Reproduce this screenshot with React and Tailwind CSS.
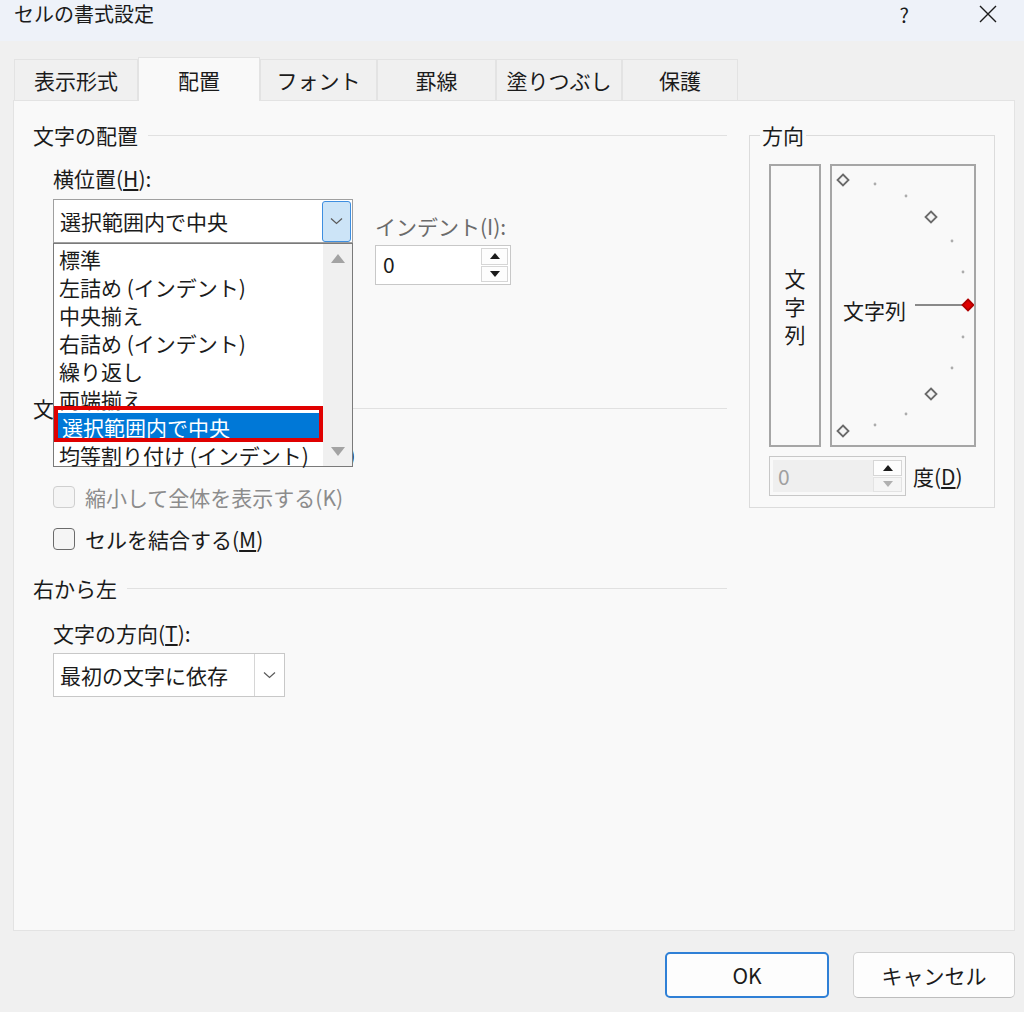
import React from 'react';

// --- Small drawings ---
const Chevron = () => (
  <svg width="13" height="8" viewBox="0 0 13 8"><path d="M1 1.5l5.5 5 5.5-5" fill="none" stroke="#5a5a5a" strokeWidth="1.2" /></svg>
);
const Tri = ({ up, color = '#1b1b1b', w = 10, h = 6 }) => (
  <svg width={w} height={h} viewBox={`0 0 ${w} ${h}`}>
    <path d={up ? `M0 ${h}L${w / 2} 0L${w} ${h}Z` : `M0 0L${w} 0L${w / 2} ${h}Z`} fill={color} />
  </svg>
);
const CloseIcon = () => (
  <svg width="18" height="18" viewBox="0 0 18 18"><path d="M1 1L17 17M17 1L1 17" stroke="#1b1b1b" strokeWidth="1.4" /></svg>
);

const Diamond = ({ x, y, red }) => (
  <path
    d={`M${x} ${y - 5.5}L${x + 5.5} ${y}L${x} ${y + 5.5}L${x - 5.5} ${y}Z`}
    fill={red ? '#e00000' : '#f4f4f4'}
    stroke={red ? '#b00000' : '#6a6a6a'}
    strokeWidth="1.8"
  />
);

const SectionHeader = ({ title }) => (
  <div className="flex items-center h-[28px] gap-[10px]">
    <span>{title}</span>
    <div className="flex-1 h-px bg-[#e1e1e1]" />
  </div>
);

const Checkbox = ({ children, disabled, small }) => (
  <div className={`flex items-center h-[28px] pl-[20px] gap-[10px] ${disabled ? 'text-[#8c8c8c]' : ''} ${small ? 'text-[20px]' : ''}`}>
    <div className={`w-[22px] h-[22px] rounded-[4px] bg-[#f5f5f5] border-[1.5px] ${disabled ? 'border-[#cfcfcf]' : 'border-[#6b6b6b]'}`} />
    <span>{children}</span>
  </div>
);

const tabs = [
  { label: '表示形式', w: 'w-[124px]' },
  { label: '配置', w: 'w-[122px]', active: true },
  { label: 'フォント', w: 'w-[117px]' },
  { label: '罫線', w: 'w-[119px]' },
  { label: '塗りつぶし', w: 'w-[126px]' },
  { label: '保護', w: 'w-[116px]' },
];

const options = ['標準', '左詰め (インデント)', '中央揃え', '右詰め (インデント)', '繰り返し', '両端揃え', '選択範囲内で中央', '均等割り付け (インデント)'];

const dots = [[43, 18], [74, 30], [120, 75], [131, 106], [131, 171], [120, 202], [74, 248], [43, 259]];

export default function App() {
  return (
    <div className="w-[1024px] h-[1012px] overflow-hidden bg-[#f0f0f0] text-[#1b1b1b] text-[21px] leading-[28px] font-['Noto_Sans_CJK_JP','Noto_Sans',sans-serif]">
      {/* --- Title bar --- */}
      <div className="h-[41px] bg-[#eef2f9]">
        <div className="h-[28px] flex items-center pl-[14px]">
          <span className="text-[20px]">セルの書式設定</span>
          <span className="ml-auto text-[20px] mr-[70px] mt-[2px]">?</span>
          <span className="mr-[27px]"><CloseIcon /></span>
        </div>
      </div>

      {/* --- Tabs --- */}
      <div className="mt-[16px] ml-[14px] h-[43px] flex items-end">
        {tabs.map(t => (
          <div
            key={t.label}
            className={`${t.w} flex items-center justify-center border border-b-0 border-[#e3e3e3] ${t.active ? 'h-[44px] -mb-px bg-[#f9f9f9] relative z-10' : 'h-[41px] bg-[#f0f0f0]'}`}
          >
            {t.label}
          </div>
        ))}
      </div>

      {/* --- Panel --- */}
      <div className="ml-[13px] w-[1002px] h-[831px] border border-[#e3e3e3] bg-[#f9f9f9] flex pt-[20px] pl-[19px]">
        <div className="w-[694px] flex flex-col">
          <SectionHeader title="文字の配置" />
          <div className="mt-[15px] pl-[20px]">横位置(<span className="underline">H</span>):</div>

          <div className="mt-[7px] pl-[20px] flex items-start">
            <div className="relative w-[300px]">
              <div className="h-[44px] border border-[#a0a0a0] bg-white flex items-center pl-[6px]">
                <span className="flex-1">選択範囲内で中央</span>
                <div className="w-[29px] h-[41px] mr-px bg-[#cce4f7] border-[1.5px] border-[#3d8ee0] rounded-[3px] flex items-center justify-center">
                  <Chevron />
                </div>
              </div>
              {/* open list */}
              <div className="absolute z-20 top-[44px] left-0 w-[300px] h-[224px] border border-[#7a7a7a] bg-white flex">
                <div className="flex-1 pt-[1px]">
                  {options.map(o => (
                    <div
                      key={o}
                      className={`h-[28px] pl-[5px] whitespace-nowrap ${o === '選択範囲内で中央' ? 'bg-[#0078d7] text-white mx-[3px] pl-[2px]' : ''}`}
                    >
                      {o}
                    </div>
                  ))}
                </div>
                <div className="w-[29px] bg-[#f0f0f0] flex flex-col items-center justify-between py-[10px]">
                  <Tri up color="#a3a3a3" w={14} h={9} />
                  <Tri color="#a3a3a3" w={14} h={9} />
                </div>
                <div className="absolute left-0 top-[162px] w-[269px] h-[36px] border-[4px] border-[#e00000]" />
              </div>
            </div>
            <div className="ml-[22px] mt-[13px]">
              <div className="text-[#6b6b6b]">インデント(I):</div>
              <div className="mt-[5px] w-[136px] h-[40px] border border-[#c8c8c8] bg-white flex">
                <span className="flex-1 pl-[7px] leading-[36px]">0</span>
                <div className="w-[31px] p-[2px] flex flex-col gap-[1px]">
                  <div className="flex-1 border border-[#d6d6d6] bg-[#fdfdfd] flex items-center justify-center"><Tri up /></div>
                  <div className="flex-1 border border-[#d6d6d6] bg-[#fdfdfd] flex items-center justify-center"><Tri /></div>
                </div>
              </div>
            </div>
          </div>

          {/* hidden behind list */}
          <div className="h-[109px] pl-[20px] pt-[6px]">
            <div>縦位置(V):</div>
            <div className="mt-[4px] w-[300px] h-[44px] border border-[#c8c8c8] bg-white pl-[6px] leading-[42px]">中央揃え</div>
          </div>

          <SectionHeader title="文字の制御" />
          <div className="mt-[19px]"><Checkbox small>折り返して全体を表示する(W)</Checkbox></div>
          <div className="mt-[14px]"><Checkbox disabled>縮小して全体を表示する(K)</Checkbox></div>
          <div className="mt-[14px]"><Checkbox>セルを結合する(<span className="underline">M</span>)</Checkbox></div>

          <div className="mt-[21px]"><SectionHeader title="右から左" /></div>
          <div className="mt-[17px] pl-[20px]">文字の方向(<span className="underline">T</span>):</div>
          <div className="mt-[6px] ml-[20px] w-[232px] h-[44px] border border-[#c8c8c8] bg-white flex items-center">
            <span className="flex-1 pl-[6px]">最初の文字に依存</span>
            <div className="w-[30px] h-full border-l border-[#d6d6d6] flex items-center justify-center"><Chevron /></div>
          </div>
        </div>

        {/* --- 方向 --- */}
        <div className="ml-[22px] w-[246px]">
          <fieldset className="border border-[#dcdcdc] pb-[11px]">
            <legend className="ml-[10px] px-[2px] text-[#1b1b1b]">方向</legend>
            <div className="mt-[15px] pl-[19px] flex gap-[9px]">
              <div className="w-[52px] h-[283px] border-2 border-[#a6a6a6] flex flex-col items-center justify-center">
                <span>文</span>
                <span>字</span>
                <span>列</span>
              </div>
              <div className="relative w-[146px] h-[283px] border-2 border-[#a6a6a6]">
                <svg className="absolute inset-0" width="142" height="279" viewBox="0 0 142 279">
                  {dots.map(([x, y]) => <circle key={`${x}-${y}`} cx={x} cy={y} r="1.4" fill="#acacac" />)}
                  <Diamond x={11} y={14} />
                  <Diamond x={99} y={51} />
                  <Diamond x={99} y={228} />
                  <Diamond x={11} y={265} />
                  <line x1="83" y1="139" x2="131" y2="139" stroke="#1b1b1b" strokeWidth="1" />
                  <Diamond x={136} y={139} red />
                </svg>
                <span className="absolute left-[11px] top-[130px]">文字列</span>
              </div>
            </div>
            <div className="mt-[9px] pl-[19px] flex items-center">
              <div className="w-[137px] h-[40px] border border-[#c8c8c8] bg-[#f9f9f9] flex p-[3px]">
                <span className="flex-1 bg-[#efefef] pl-[5px] text-[#a0a0a0] leading-[32px]">0</span>
                <div className="w-[29px] flex flex-col gap-[1px]">
                  <div className="flex-1 border border-[#d6d6d6] bg-[#fdfdfd] flex items-center justify-center"><Tri up /></div>
                  <div className="flex-1 border border-[#e3e3e3] bg-[#f5f5f5] flex items-center justify-center"><Tri color="#b0b0b0" /></div>
                </div>
              </div>
              <span className="ml-[7px]">度(<span className="underline">D</span>)</span>
            </div>
          </fieldset>
        </div>
      </div>

      {/* --- Buttons --- */}
      <div className="mt-[21px] flex justify-end pr-[9px] gap-[24px]">
        <button className="w-[164px] h-[46px] rounded-[5px] border-2 border-[#2f80d6] bg-[#fdfdfd] text-[21px]">OK</button>
        <button className="w-[162px] h-[46px] rounded-[5px] border border-[#d1d1d1] border-b-[#bdbdbd] bg-[#fdfdfd] text-[21px]">キャンセル</button>
      </div>
    </div>
  );
}
